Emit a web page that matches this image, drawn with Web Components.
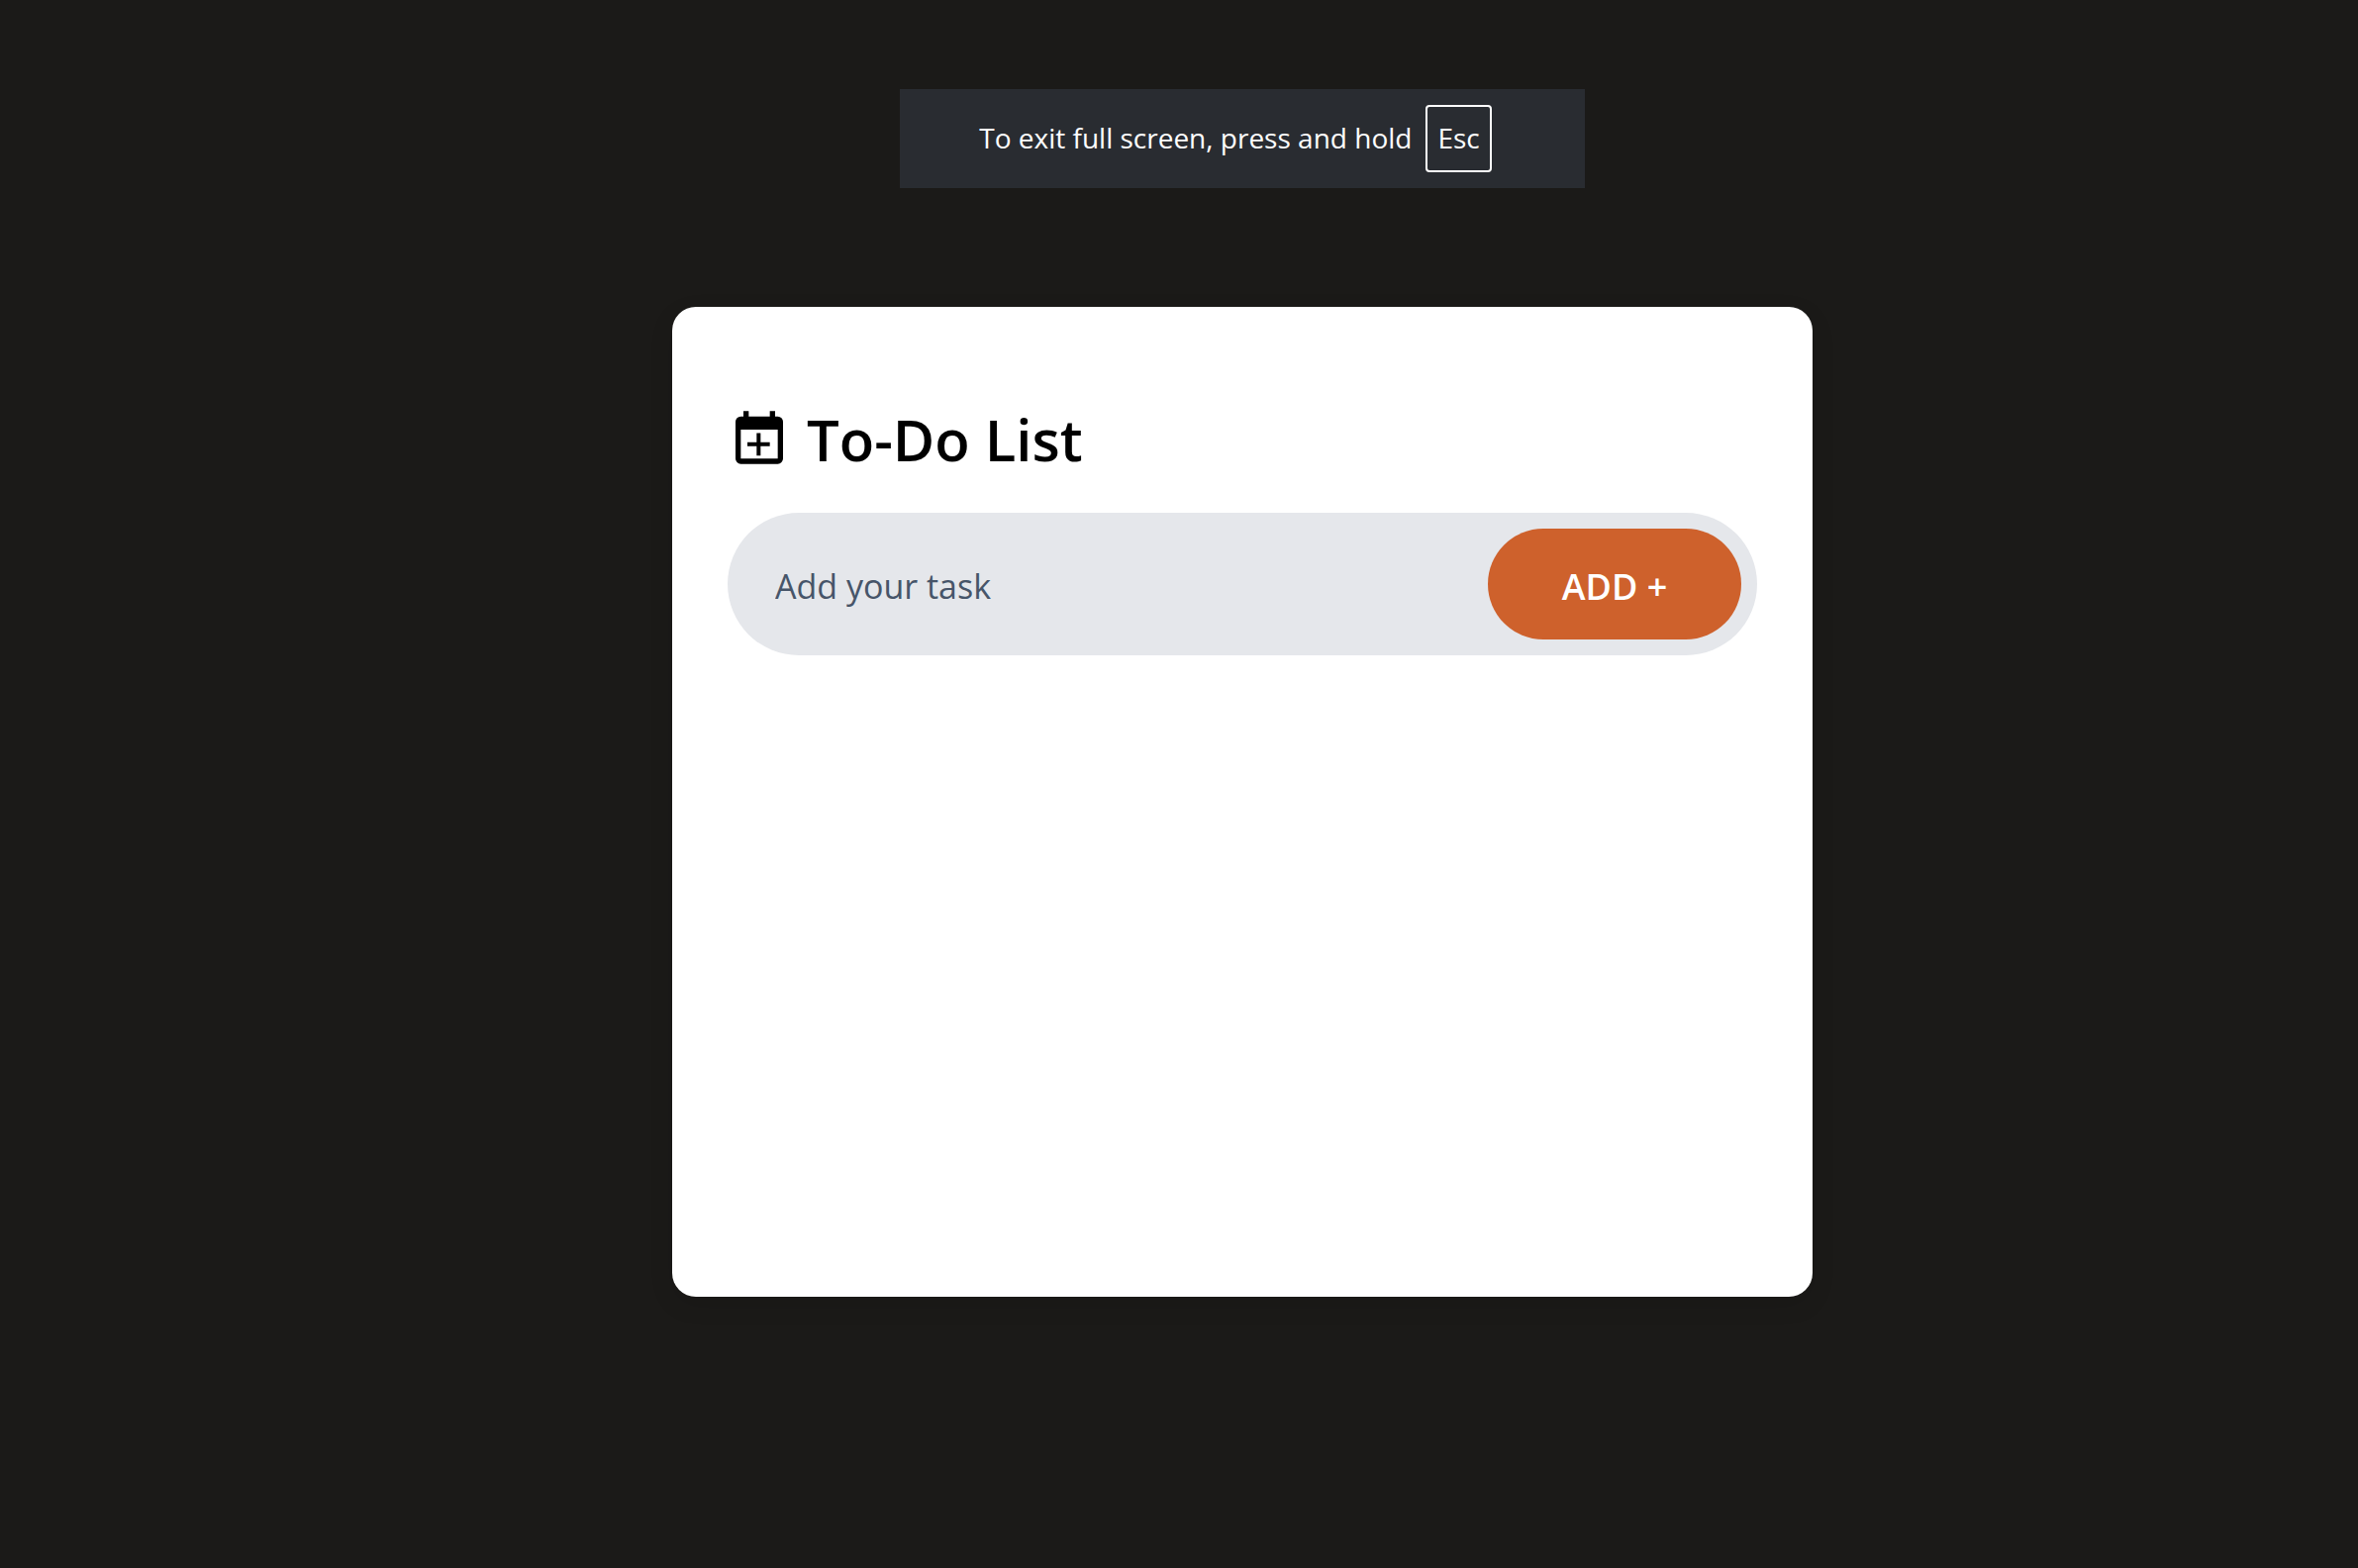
<!DOCTYPE html>
<html lang="en">
<head>
<meta charset="utf-8">
<meta name="viewport" content="width=device-width, initial-scale=1">
<title>To-Do List</title>
<style>
  html { background: #1b1a18; }
  body { margin: 0; font-family: "Open Sans", "Noto Sans", sans-serif; }
</style>
</head>
<body>
<todo-app></todo-app>
<script>
  const define = (name, html, setup) => {
    const template = document.createElement("template");
    template.innerHTML = html;
    customElements.define(name, class extends HTMLElement {
      constructor() {
        super();
        this.attachShadow({ mode: "open" }).append(template.content.cloneNode(true));
        if (setup) setup(this.shadowRoot);
      }
    });
  };

  define("key-cap", `
    <style>
      :host { display: block; }
      kbd {
        display: block; font: inherit; line-height: 62px;
        padding: 0 10px 2px; border: 2px solid #fff; border-radius: 4px;
      }
    </style>
    <kbd><slot></slot></kbd>`);

  define("fullscreen-hint", `
    <style>
      :host {
        display: flex; align-items: center; gap: 14px;
        padding: 16px 94px 16px 80px;
        background: #292c31; color: #fff;
        font-size: 28px; line-height: 66px; white-space: nowrap;
      }
      span { padding-bottom: 2px; }
    </style>
    <span><slot></slot></span>
    <key-cap><slot name="key"></slot></key-cap>`);

  define("calendar-icon", `
    <style>
      :host { display: block; width: 64px; height: 64px; flex: none; padding-top: 4px; }
      svg { display: block; width: 100%; height: 100%; }
    </style>
    <svg viewBox="0 0 24 24" fill="currentColor" aria-hidden="true">
      <path fill-rule="evenodd" d="M6 2h2v2h8V2h2v2h1a2 2 0 0 1 2 2v14a2 2 0 0 1-2 2H5a2 2 0 0 1-2-2V6a2 2 0 0 1 2-2h1zM5 9v11h14V9z"/>
      <path d="M11 10.3h1.5v3.5H16v1.5h-3.5v3.5H11v-3.5H7.5v-1.5H11z"/>
    </svg>`);

  define("card-title", `
    <style>
      :host { display: flex; align-items: flex-start; gap: 16px; }
      h1 { margin: 0; font-size: 58px; font-weight: 600; line-height: 76px; }
    </style>
    <calendar-icon></calendar-icon>
    <h1><slot></slot></h1>`);

  define("task-form", `
    <style>
      :host { display: block; }
      form {
        display: flex; align-items: center; padding: 16px;
        background: #e5e7eb; border-radius: 72px;
      }
      input {
        flex: 1; min-width: 0; height: 112px; box-sizing: border-box;
        margin: 0; padding: 4px 32px 0; border: 0; outline: 0; background: none;
        font: inherit; font-size: 34px; color: #475569;
      }
      input::placeholder { color: #475569; opacity: 1; }
      button {
        width: 256px; height: 112px; flex: none; margin: 0; padding: 4px 0 0; border: 0;
        border-radius: 56px; background: #ce612c; color: #fff;
        font: inherit; font-size: 36px; font-weight: 600; cursor: pointer;
      }
    </style>
    <form>
      <input type="text" placeholder="Add your task" aria-label="Add your task">
      <button type="submit">ADD +</button>
    </form>`,
    root => root.querySelector("form").addEventListener("submit", e => e.preventDefault()));

  define("todo-card", `
    <style>
      :host {
        display: flex; flex-direction: column; gap: 36px;
        box-sizing: border-box; width: 100%; max-width: 1152px; min-height: 1000px;
        padding: 96px 56px 56px; border-radius: 24px;
        background: #fff; color: #000;
        box-shadow: 0 8px 24px rgba(0, 0, 0, .1);
      }
    </style>
    <slot></slot>`);

  define("todo-app", `
    <style>
      :host {
        display: flex; flex-direction: column; align-items: center; gap: 120px;
        box-sizing: border-box; min-height: 100vh;
        padding: 90px 0 90px 128px; background: #1b1a18;
      }
    </style>
    <fullscreen-hint>To exit full screen, press and hold<span slot="key">Esc</span></fullscreen-hint>
    <todo-card>
      <card-title>To-Do List</card-title>
      <task-form></task-form>
    </todo-card>`);
</script>
</body>
</html>
